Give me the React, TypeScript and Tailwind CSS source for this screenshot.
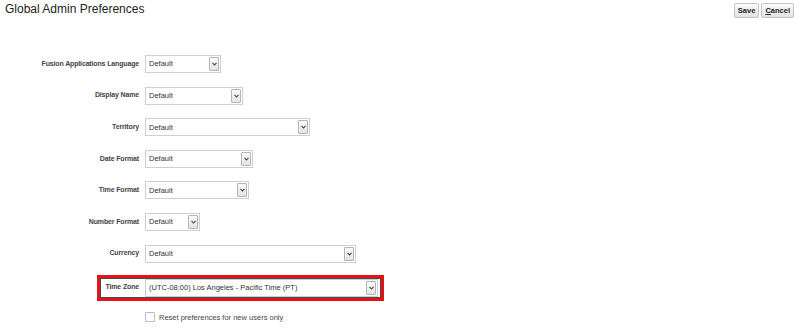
import React from 'react';

const rows = [
  { label: 'Fusion Applications Language', width: 76 },
  { label: 'Display Name', width: 98 },
  { label: 'Territory', width: 165 },
  { label: 'Date Format', width: 108 },
  { label: 'Time Format', width: 104 },
  { label: 'Number Format', width: 55 },
  { label: 'Currency', width: 211 },
];

function FakeSelect({ value, width }: { value: string; width: number }) {
  return (
    <div
      className="flex h-[18px] items-center border border-[#cfcfcf] bg-white pl-[3px] pr-[1px]"
      style={{ width }}
    >
      <span className="flex-1 truncate text-[7.5px] text-[#333]">{value}</span>
      {/* arrow button */}
      <span className="flex h-[14px] w-[10px] items-center justify-center rounded-[1px] border border-[#b5b5b5] bg-gradient-to-b from-[#fafafa] to-[#e4e4e4]">
        <svg width="5" height="4" viewBox="0 0 5 4">
          <path d="M0.5 0.8 L2.5 3 L4.5 0.8" fill="none" stroke="#444" strokeWidth="1.1" />
        </svg>
      </span>
    </div>
  );
}

export default function App() {
  return (
    <div className="h-[332px] w-[800px] bg-white font-['Liberation_Sans',Arial,sans-serif] text-[#333]">
      {/* Header */}
      <div className="flex items-start justify-between pl-[5px] pr-[6px] pt-[2px]">
        <h1 className="text-[12px] leading-[14px] font-normal text-[#222]">Global Admin Preferences</h1>
        <div className="mt-[1px] flex gap-[2px]">
          <button className="h-[15px] rounded-[2px] border border-[#c4c4c4] bg-gradient-to-b from-[#fbfbfb] to-[#e2e2e2] px-[3px] text-[7.5px] font-bold text-[#222]">
            Save
          </button>
          <button className="h-[15px] rounded-[2px] border border-[#c4c4c4] bg-gradient-to-b from-[#fbfbfb] to-[#e2e2e2] px-[3px] text-[7.5px] font-bold text-[#222]">
            <span className="underline">C</span>ancel
          </button>
        </div>
      </div>

      {/* Form */}
      <div className="mt-[37px] flex flex-col gap-[13.6px]">
        {rows.map((r) => (
          <div key={r.label} className="flex h-[18px] items-center">
            <div className="w-[139px] whitespace-nowrap text-right text-[7px] font-bold tracking-[-0.15px] text-[#444]">
              {r.label}
            </div>
            <div className="ml-[6px]">
              <FakeSelect value="Default" width={r.width} />
            </div>
          </div>
        ))}
      </div>

      {/* Highlighted time zone row */}
      <div className="ml-[97px] mt-[12px] flex h-[26px] w-[287px] items-center border-[3px] border-[#e3121b] shadow-[inset_0_0_0_1px_#4a4a4a] pr-[3px]">
        <div className="w-[39px] whitespace-nowrap text-right text-[7px] font-bold tracking-[-0.15px] text-[#444]">
          Time Zone
        </div>
        <div className="ml-[6px]">
          <FakeSelect value="(UTC-08:00) Los Angeles - Pacific Time (PT)" width={233} />
        </div>
      </div>

      {/* Checkbox */}
      <label className="ml-[145px] mt-[11px] flex items-center gap-[4px]">
        <span className="h-[10px] w-[10px] rounded-[1px] border border-[#bdbdbd] bg-white" />
        <span className="text-[7.5px] text-[#444]">Reset preferences for new users only</span>
      </label>
    </div>
  );
}
